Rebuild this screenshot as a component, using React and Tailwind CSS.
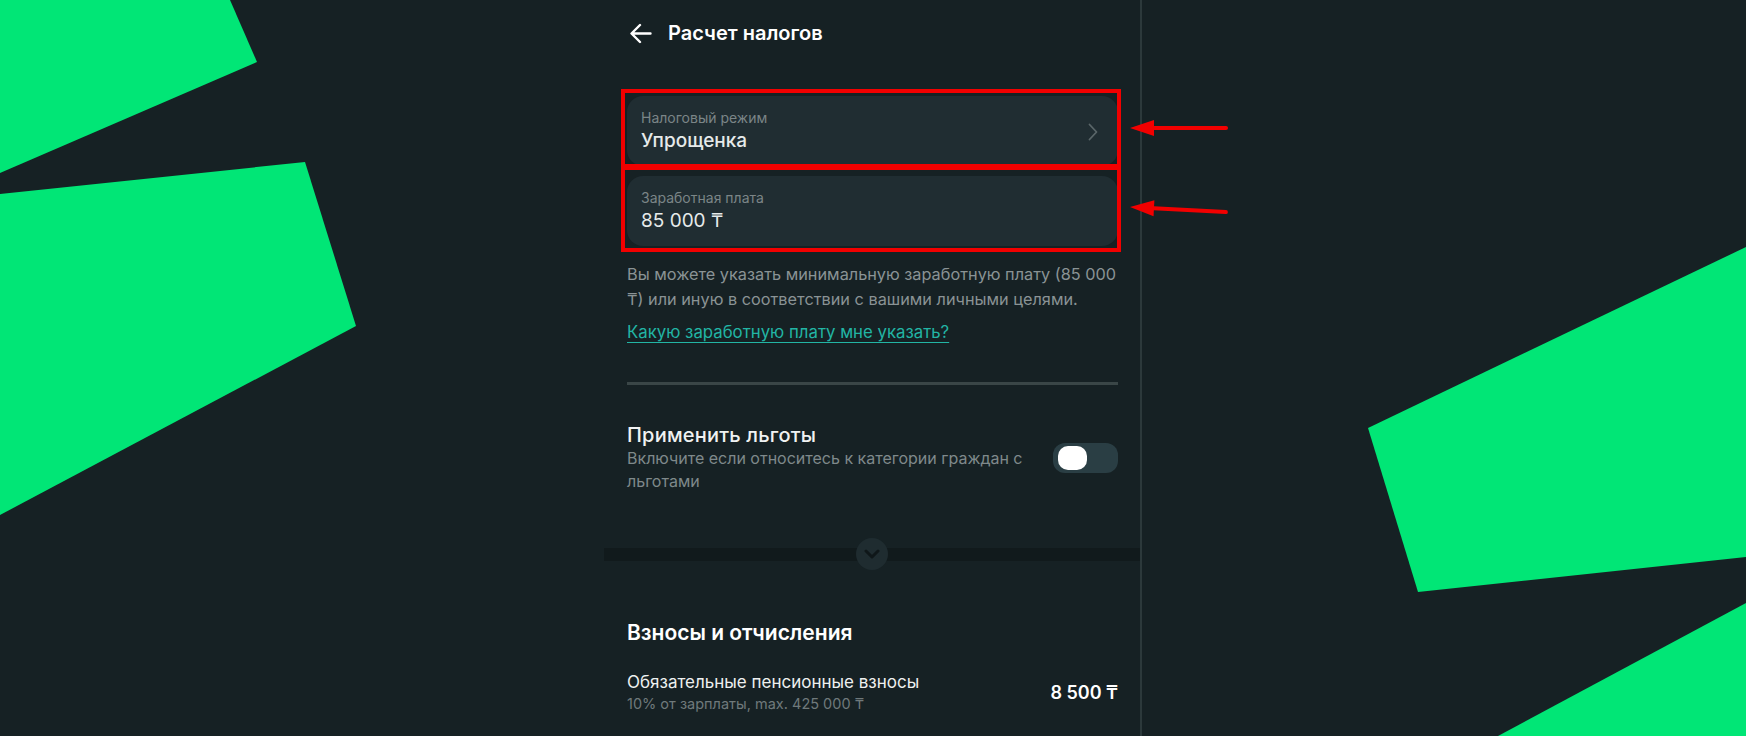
import { useState } from 'react'


function Backdrop() {
    return (
        <svg className="absolute inset-0 pointer-events-none" width="1746" height="736" viewBox="0 0 1746 736">
            <g fill="#01e676">
                <polygon points="0,0 230,0 257,62 0,173" />
                <polygon points="0,194 305,162 356,326 0,515" />
                <polygon points="1746,247 1368,428 1418,592 1746,557" />
                <polygon points="1746,603 1498,736 1746,736" />
            </g>
        </svg>
    )
}

function Field({ label, value, arrow, bold }) {
    return (
        <div className="h-[70px] rounded-2xl bg-[#202d32] pl-[14px] pr-5 pt-[14px] flex items-start justify-between">
            <div className="flex flex-col">
                <span className="text-[14px] leading-4 text-[#7b8587]">{label}</span>
                <span className={`text-[19px] leading-6 text-[#e6eaea] mt-[3px] ${bold ? 'font-medium' : 'font-normal'}`}>{value}</span>
            </div>
            {arrow && (
                <svg width="10" height="18" viewBox="0 0 10 18" className="mt-[13px]">
                    <path d="M1.5 1.5 L8.5 9 L1.5 16.5" fill="none" stroke="#5a6669" strokeWidth="1.8" strokeLinecap="round" strokeLinejoin="round" />
                </svg>
            )}
        </div>
    )
}

function Toggle() {
    const [on, setOn] = useState(false)
    return (
        <button
            onClick={() => setOn(v => !v)}
            className={`w-[65px] h-[30px] shrink-0 rounded-[12px] bg-[#2a3e44] flex items-center px-[5px] ${on ? 'justify-end' : 'justify-start'}`}
        >
            <span className="w-[29px] h-[24px] rounded-[10px] bg-white" />
        </button>
    )
}

function Pointer({ className }) {
    return (
        <svg width="100" height="20" viewBox="0 0 100 20" className={className}>
            <line x1="20" y1="10" x2="97" y2="10" stroke="#f20000" strokeWidth="4" strokeLinecap="round" />
            <polygon points="1,10 25,2 25,18" fill="#f20000" />
        </svg>
    )
}

export default function App() {
    return (
        <div className="relative w-full h-[736px] overflow-hidden bg-[#162124] font-['Inter','Noto_Sans',sans-serif]">
            <Backdrop />

            <div className="relative mx-auto w-[538px] h-full border-r-2 border-[#2c393b]">
                <div className="pl-[23px] pr-[22px] pt-[21px]">
                    <div className="flex items-center gap-4 h-6 pl-[3px]">
                        <svg width="22" height="21" viewBox="0 0 22 21">
                            <path d="M20.5 10.5H2 M10 2 L1.5 10.5 L10 19" fill="none" stroke="#ffffff" strokeWidth="2.4" strokeLinecap="round" strokeLinejoin="round" />
                        </svg>
                        <h1 className="text-[20px] font-semibold text-white">Расчет налогов</h1>
                    </div>

                    <div className="mt-[51px] flex flex-col gap-[10px]">
                        <Field label="Налоговый режим" value="Упрощенка" arrow bold />
                        <Field label="Заработная плата" value="85 000 ₸" />
                    </div>

                    <p className="mt-4 text-[16.3px] leading-[25px] text-[#8a9395]">
                        <span className="whitespace-nowrap">Вы можете указать минимальную заработную плату (85 000</span><br />₸) или иную в соответствии с вашими личными целями.
                    </p>

                    <a href="#" className="mt-2 inline-block text-[16.8px] leading-6 text-[#22b5a4] underline underline-offset-4 decoration-1">
                        Какую заработную плату мне указать?
                    </a>

                    <div className="mt-[38px] h-[3px] bg-[#3a4647]" />

                    <div className="mt-[38px] flex items-center justify-between gap-6">
                        <div className="flex flex-col">
                            <span className="text-[20px] leading-[24px] font-medium tracking-[0.01em] text-[#f0f2f2]">Применить льготы</span>
                            <span className="text-[16px] leading-[23px] text-[#7f898b]">Включите если относитесь к категории граждан с льготами</span>
                        </div>
                        <Toggle />
                    </div>
                </div>

                <div className="relative mt-[55px] h-[13px] bg-[#111a1c]">
                    <div className="absolute left-[252px] top-[-10px] w-8 h-8 rounded-full bg-[#1f2c30] flex items-center justify-center">
                        <svg width="16" height="10" viewBox="0 0 16 10">
                            <path d="M2 2 L8 8 L14 2" fill="none" stroke="#0f1719" strokeWidth="3" strokeLinecap="round" strokeLinejoin="round" />
                        </svg>
                    </div>
                </div>

                <div className="pl-[23px] pr-[22px]">
                    <h2 className="mt-[58px] text-[21px] leading-7 font-semibold text-white">Взносы и отчисления</h2>
                    <div className="mt-[24px] flex items-center justify-between">
                        <div className="flex flex-col">
                            <span className="text-[17px] leading-[22px] text-[#eef0f0]">Обязательные пенсионные взносы</span>
                            <span className="text-[14.5px] leading-[19px] text-[#6f797b] mt-px">10% от зарплаты, max. 425 000 ₸</span>
                        </div>
                        <span className="text-[18px] font-semibold text-white">8 500 ₸</span>
                    </div>
                </div>

                {/* annotation boxes */}
                <div className="absolute left-[17px] top-[89px] w-[500px] h-[79px] border-4 border-[#f20000] pointer-events-none" />
                <div className="absolute left-[17px] top-[166px] w-[500px] h-[86px] border-4 border-[#f20000] pointer-events-none" />
                <Pointer className="absolute left-[525px] top-[118px]" />
                <Pointer className="absolute left-[525px] top-[197px] rotate-[3deg] origin-left" />
            </div>
        </div>
    )
}
